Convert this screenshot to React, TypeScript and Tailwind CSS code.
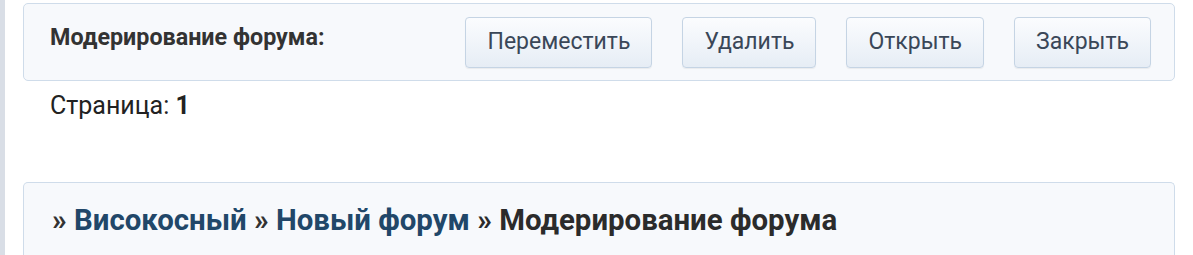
const ACTIONS = ['Переместить', 'Удалить', 'Открыть', 'Закрыть'];

export default function App() {
  return (
    <div className="flex min-h-[255px] bg-white font-['Roboto','Liberation_Sans',sans-serif]">
      <div className="w-[5px] shrink-0 bg-[#d9dee6]" />
      <div className="flex-1 pl-[18px] pr-[18px] pt-[3px]">
        {/* Moderation panel */}
        <div className="flex h-[78px] items-center justify-between rounded-[5px] border border-[#cfdcea] bg-[#f7f9fc] pl-[26px] pr-[23px]">
          <span className="-mt-[11px] text-[23.3px] leading-[28px] font-bold text-[#333]">Модерирование форума:</span>
          <div className="flex gap-[30px] pt-[1px]">
            {ACTIONS.map((label) => (
              <button
                key={label}
                className="h-[51px] rounded-[4px] border border-[#c5d4e4] bg-gradient-to-b from-[#fbfcfe] to-[#e6edf5] px-[21px] text-[23px] text-[#3a4758] shadow-[0_1px_1px_rgba(0,0,0,0.06)]"
              >
                {label}
              </button>
            ))}
          </div>
        </div>

        <div className="mt-[10px] pl-[27px] text-[25px] leading-[30px] text-[#222]">
          Страница: <b>1</b>
        </div>

        {/* Breadcrumb */}
        <div className="mt-[61px] h-[80px] rounded-t-[5px] border border-b-0 border-[#cfdcea] bg-[#f7f9fc] pl-[28px] pt-[20px] text-[29.4px] leading-[34px] font-bold text-[#2b2b2b]">
          <span className="text-[#333]">» </span>
          <a className="text-[#214769]">Високосный</a>
          <span className="text-[#333]"> » </span>
          <a className="text-[#214769]">Новый форум</a>
          <span> » Модерирование форума</span>
        </div>
      </div>
    </div>
  );
}
